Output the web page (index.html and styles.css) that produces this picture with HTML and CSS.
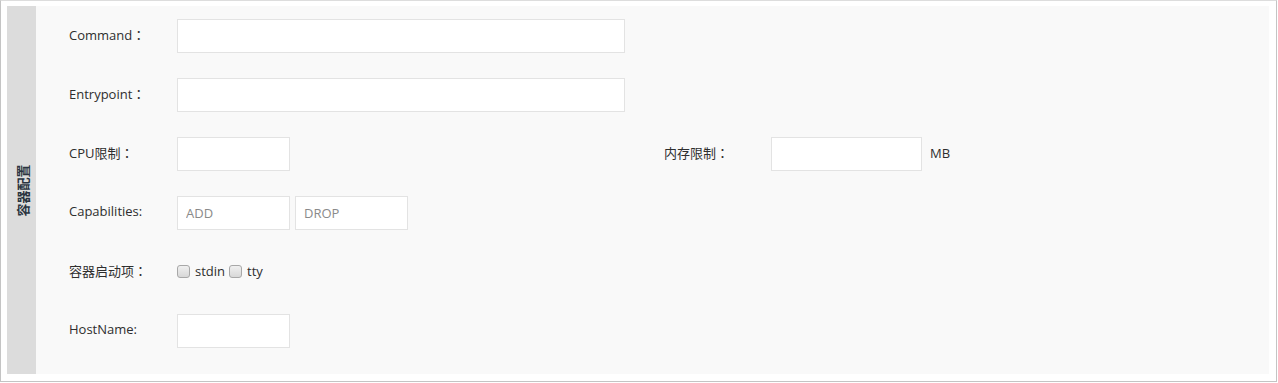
FILE: index.html
```html
<!DOCTYPE html>
<html lang="zh-CN">
<head>
<meta charset="utf-8">
<title>容器配置</title>
<link rel="stylesheet" href="styles.css">
</head>
<body>
<div class="frame">
  <div class="box">
    <div class="side"><span class="side-title">容器配置</span></div>
    <div class="panel">
      <div class="row">
        <label class="lbl">Command<span class="colon" lang="zh-TW">：</span></label>
        <input class="inp wide" type="text">
      </div>
      <div class="row">
        <label class="lbl">Entrypoint<span class="colon" lang="zh-TW">：</span></label>
        <input class="inp wide" type="text">
      </div>
      <div class="row">
        <div class="half">
          <label class="lbl">CPU限制<span class="colon" lang="zh-TW">：</span></label>
          <input class="inp short" type="text">
        </div>
        <label class="lbl lbl2">内存限制<span class="colon" lang="zh-TW">：</span></label>
        <input class="inp mid" type="text">
        <span class="unit">MB</span>
      </div>
      <div class="row">
        <label class="lbl">Capabilities:</label>
        <input class="inp short" type="text" placeholder="ADD">
        <input class="inp short gap" type="text" placeholder="DROP">
      </div>
      <div class="row">
        <label class="lbl">容器启动项<span class="colon" lang="zh-TW">：</span></label>
        <label class="chk"><input type="checkbox" class="cb"><span class="chk-text">stdin</span></label>
        <label class="chk"><input type="checkbox" class="cb"><span class="chk-text">tty</span></label>
      </div>
      <div class="row last">
        <label class="lbl">HostName:</label>
        <input class="inp short" type="text">
      </div>
    </div>
  </div>
</div>
</body>
</html>
```

FILE: styles.css
```css
html, body {
  margin: 0;
  padding: 0;
  background: #ffffff;
}
body {
  font-family: "Open Sans", "Noto Sans CJK SC", sans-serif;
  font-size: 13px;
  color: #2e2e2e;
}
.frame {
  width: 1277px;
  height: 382px;
  box-sizing: border-box;
  border: 1px solid #c4c4c4;
  border-top-color: #dddddd;
  padding: 5px 7px 7px 6px;
}
.box {
  display: flex;
  height: 100%;
}
.side {
  width: 29px;
  flex: none;
  background: #dcdcdc;
  display: flex;
  align-items: center;
  justify-content: center;
}
.side-title {
  display: block;
  white-space: nowrap;
  transform: rotate(-90deg);
  font-family: "Noto Sans CJK SC", sans-serif;
  font-weight: bold;
  font-size: 13px;
  color: #2a3440;
}
.panel {
  flex: 1;
  background: #f9f9f9;
  padding: 13px 0 0 33px;
}
.row {
  display: flex;
  align-items: center;
  height: 34px;
  margin-bottom: 25px;
}
.half {
  display: flex;
  align-items: center;
  width: 595px;
}
.lbl {
  width: 108px;
  flex: none;
  white-space: nowrap;
  padding-bottom: 4px;
}
.lbl2 {
  width: 107px;
}
.colon {
  font-family: "Noto Sans CJK TC", sans-serif;
}
.inp {
  box-sizing: border-box;
  height: 34px;
  border: 1px solid #e3e3e3;
  background: #ffffff;
  padding: 0 8px;
  font-family: inherit;
  font-size: 13px;
  color: #333;
  outline: none;
  margin: 0;
}
.inp::placeholder {
  color: #8a8a8a;
}
.wide { width: 448px; }
.short { width: 113px; }
.mid { width: 151px; }
.gap { margin-left: 5px; }
.unit {
  margin-left: 8px;
  padding-bottom: 2px;
}
.chk {
  display: flex;
  align-items: center;
  margin-right: 4px;
  padding-bottom: 2px;
}
.cb {
  appearance: none;
  -webkit-appearance: none;
  width: 13px;
  height: 13px;
  box-sizing: border-box;
  margin: 0 5px 0 0;
  border: 1px solid #a8a8a8;
  border-radius: 3px;
  background: linear-gradient(#f0f0f0, #d8d8d8);
}
.last {
  margin-bottom: 0;
}
```
